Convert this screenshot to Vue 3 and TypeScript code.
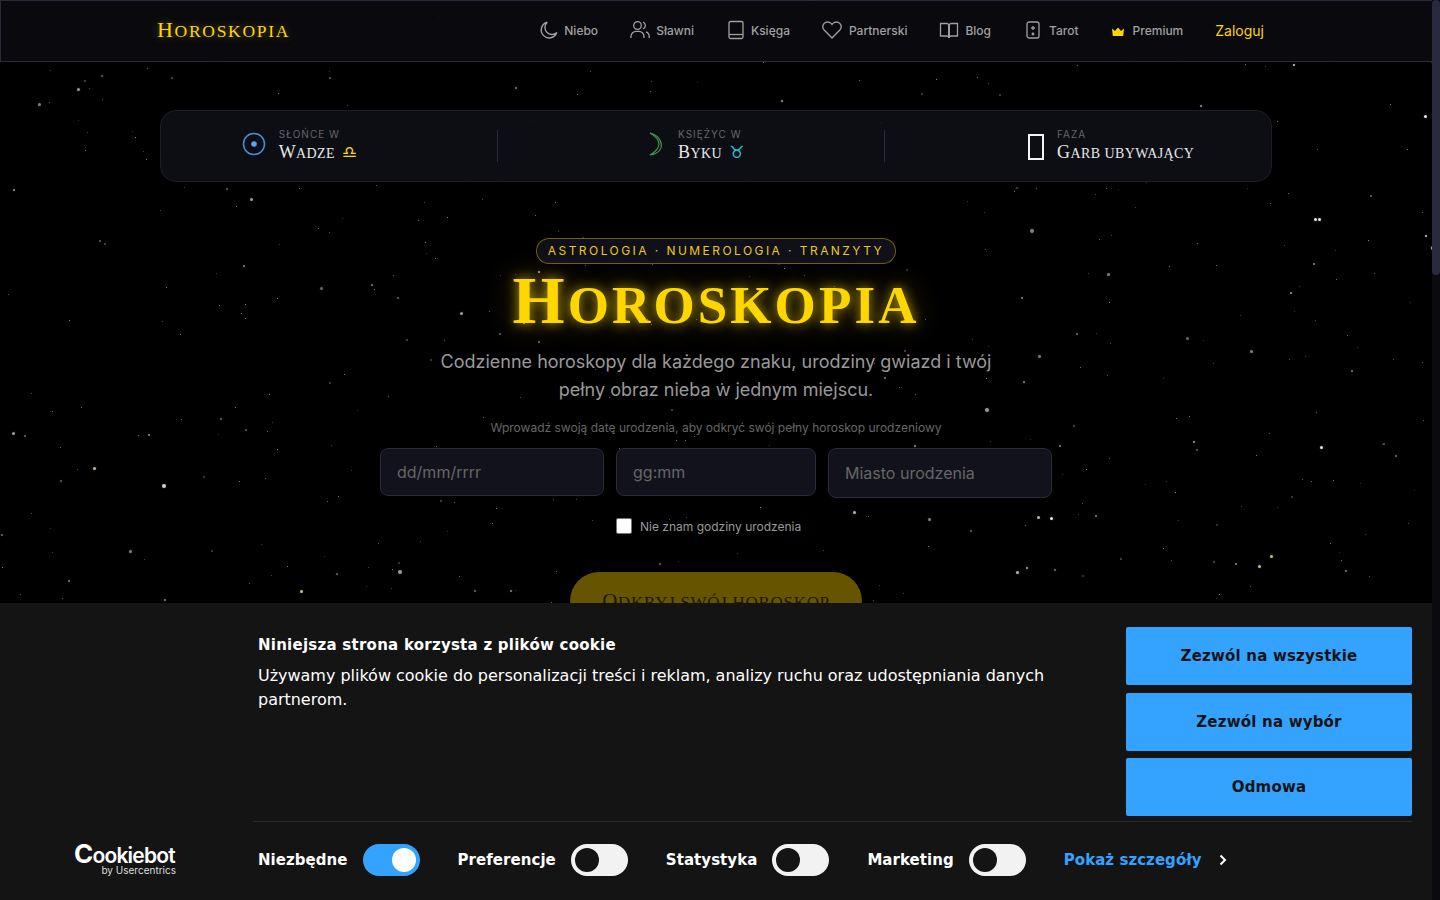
<template>
  <div class="screen">
    <div class="page">
      <div class="sky">
        <i
          v-for="(s, i) in stars"
          :key="i"
          class="star"
          :style="{ left: s.x + 'px', top: s.y + 'px', width: s.r + 'px', height: s.r + 'px', opacity: s.o, background: s.c }"
        ></i>
      </div>

      <header class="topbar">
        <a class="logo">Horoskopia</a>
        <nav class="nav">
          <a v-for="item in navItems" :key="item.label" class="nav-link" :style="{ gap: item.gap + 'px' }">
            <svg v-if="item.icon === 'moon'" width="20" height="20" viewBox="0 0 20 20" fill="none" stroke="currentColor" stroke-width="1.4"><path d="M8.2 2.2a8 8 0 1 0 9.6 10.4 7 7 0 0 1-9.6-10.4z" /></svg>
            <svg v-else-if="item.icon === 'people'" width="20" height="20" viewBox="0 0 20 20" fill="none" stroke="currentColor" stroke-width="1.3"><circle cx="7.5" cy="5.5" r="3.8" /><path d="M1 18v-1.5a5.2 5.2 0 0 1 5.2-5.2h2.6a5.2 5.2 0 0 1 5.2 5.2V18" /><path d="M13 2a3.8 3.8 0 0 1 0 7" /><path d="M16 11.8a5 5 0 0 1 3.2 4.7V18" /></svg>
            <svg v-else-if="item.icon === 'book'" width="20" height="20" viewBox="0 0 20 20" fill="none" stroke="currentColor" stroke-width="1.3"><rect x="3" y="1.5" width="14" height="17" rx="1.5" /><path d="M3 14.5h14" /></svg>
            <svg v-else-if="item.icon === 'heart'" width="20" height="20" viewBox="0 0 20 20" fill="none" stroke="currentColor" stroke-width="1.3"><path d="M10 18 2.2 10a5 5 0 0 1 0-6.6 4.8 4.8 0 0 1 6.8 0l1 1.1 1-1.1a4.8 4.8 0 0 1 6.8 0 5 5 0 0 1 0 6.6z" /></svg>
            <svg v-else-if="item.icon === 'open'" width="20" height="20" viewBox="0 0 20 20" fill="none" stroke="currentColor" stroke-width="1.3"><path d="M1.5 3.5H8l2 1 2-1h6.5V16H12l-2 1-2-1H1.500z" /><path d="M10 4v14" stroke-width="2" /></svg>
            <svg v-else-if="item.icon === 'card'" width="20" height="20" viewBox="-2 0 20 20" fill="none" stroke="currentColor" stroke-width="1.3"><rect x="2" y="2" width="12" height="16" rx="2" /><path d="M8 6v4M6 8h4" /><circle cx="8" cy="14" r=".8" fill="currentColor" /></svg>
            <svg v-else-if="item.icon === 'crown'" class="crown" width="14" height="20" viewBox="0 0 14 20"><path d="M1 8.5l3 2.5 3-3.500 3 3.500 3-2.500-.8 7.500H1.800z" fill="#ffd700" /></svg>
            <span>{{ item.label }}</span>
          </a>
          <a class="login">Zaloguj</a>
        </nav>
      </header>

      <main class="main">
        <section class="sky-bar">
          <div class="sky-item">
            <svg class="sun" width="24" height="24" viewBox="0 0 24 24" fill="none"><circle cx="12" cy="12" r="10.5" stroke="#4a90d9" stroke-width="1.5" /><circle cx="12" cy="12" r="2.8" fill="#56a5ee" /></svg>
            <div>
              <div class="sky-label">Słońce w</div>
              <div class="sky-value">Wadze <span class="sign libra">♎</span></div>
            </div>
          </div>
          <div class="sky-sep"></div>
          <div class="sky-item">
            <svg class="crescent" width="16" height="24" viewBox="0 0 16 24" fill="none"><path d="M1 1c12 2 18 19 0 22 6-3.500 9-8 9-11S7 4.500 1 1z" stroke="#3f9c4c" stroke-width="1.2" /></svg>
            <div>
              <div class="sky-label">Księżyc w</div>
              <div class="sky-value">Byku <span class="sign taurus">♉</span></div>
            </div>
          </div>
          <div class="sky-sep"></div>
          <div class="sky-item">
            <span class="tofu"></span>
            <div>
              <div class="sky-label">Faza</div>
              <div class="sky-value">Garb ubywający</div>
            </div>
          </div>
        </section>

        <section class="hero">
          <div class="badge">ASTROLOGIA · NUMEROLOGIA · TRANZYTY</div>
          <h1 class="title">Horoskopia</h1>
          <p class="subtitle">Codzienne horoskopy dla każdego znaku, urodziny gwiazd i twój<br />pełny obraz nieba w jednym miejscu.</p>
          <p class="hint">Wprowadź swoją datę urodzenia, aby odkryć swój pełny horoskop urodzeniowy</p>
          <form class="birth-form" @submit.prevent>
            <input class="field date" placeholder="dd/mm/rrrr" />
            <input class="field time" placeholder="gg:mm" />
            <input class="field city" placeholder="Miasto urodzenia" />
          </form>
          <label class="unknown">
            <span class="box"></span>
            Nie znam godziny urodzenia
          </label>
          <button class="cta" type="button"><span class="cta-text">Odkryj swój horoskop</span></button>
        </section>
      </main>

      <aside class="cookie">
        <div class="cookie-logo">
          <div class="cb-name"><span class="cb-c">C</span>ookiebot</div>
          <div class="cb-by">by Usercentrics</div>
        </div>
        <div class="cookie-body">
          <div class="cookie-top">
            <div class="cookie-text">
              <h2>Niniejsza strona korzysta z plików cookie</h2>
              <p>Używamy plików cookie do personalizacji treści i reklam, analizy ruchu oraz udostępniania danych partnerom.</p>
            </div>
            <div class="cookie-actions">
              <button v-for="b in cookieButtons" :key="b" class="cookie-btn" type="button">{{ b }}</button>
            </div>
          </div>
          <div class="cookie-bottom">
            <div v-for="t in toggles" :key="t.label" class="consent">
              <span class="consent-label">{{ t.label }}</span>
              <span class="toggle" :class="{ on: t.on }"><span class="knob"></span></span>
            </div>
            <a class="details">Pokaż szczegóły
              <svg width="10" height="12" viewBox="0 0 10 12" fill="none" stroke="#fff" stroke-width="2"><path d="M2.5 1.5 7 6l-4.500 4.500" /></svg>
            </a>
          </div>
        </div>
      </aside>
    </div>
    <div class="scrollbar"><div class="thumb"></div></div>
  </div>
</template>

<script setup lang="ts">
interface Star {
  x: number;
  y: number;
  r: number;
  o: number;
  c: string;
}

const navItems = [
  { label: "Niebo", icon: "moon", gap: 5 },
  { label: "Sławni", icon: "people", gap: 6 },
  { label: "Księga", icon: "book", gap: 5 },
  { label: "Partnerski", icon: "heart", gap: 7 },
  { label: "Blog", icon: "open", gap: 6 },
  { label: "Tarot", icon: "card", gap: 6 },
  { label: "Premium", icon: "crown", gap: 8 },
];

const cookieButtons = ["Zezwól na wszystkie", "Zezwól na wybór", "Odmowa"];

const toggles = [
  { label: "Niezbędne", on: true },
  { label: "Preferencje", on: false },
  { label: "Statystyka", on: false },
  { label: "Marketing", on: false },
];

// the brighter stars, read off the reference
const bright: [number, number, number, number][] = [
  [77, 88, 3, 0.6], [38, 103, 3, 0.5], [1293, 64, 2, 0.8], [1314, 218, 3, 0.9], [1318, 218, 3, 0.9],
  [1030, 229, 4, 0.5], [1107, 273, 3, 0.5], [1320, 446, 3, 0.9], [985, 408, 4, 0.6], [1038, 355, 3, 0.5],
  [162, 484, 4, 0.8], [12, 432, 3, 0.6], [398, 570, 4, 0.6], [1016, 571, 3, 0.7], [1026, 567, 2, 0.7],
  [853, 511, 3, 0.7], [928, 518, 3, 0.5], [1037, 516, 3, 0.7], [1050, 517, 3, 0.9], [129, 550, 3, 0.5],
  [68, 580, 2, 0.5], [320, 287, 3, 0.4], [460, 312, 3, 0.6], [250, 198, 3, 0.6], [243, 265, 2, 0.5],
  [1186, 337, 3, 0.4], [1290, 292, 2, 0.6], [1424, 115, 3, 0.9], [1425, 235, 2, 0.8], [1431, 246, 4, 0.7],
  [1250, 350, 3, 0.5], [1370, 195, 2, 0.4], [880, 122, 2, 0.6], [1200, 105, 2, 0.6], [440, 500, 2, 0.3],
  [1095, 515, 2, 0.5], [1345, 570, 2, 0.5], [60, 480, 2, 0.4], [215, 60, 2, 0.4],
];

const golds: [number, number][] = [[1258, 565], [93, 467], [300, 590], [1270, 555]];

// small deterministic generator so the field is the same on every load
let seed = 4711;
const rnd = () => {
  seed = (seed * 16807) % 2147483647;
  return seed / 2147483647;
};

const stars: Star[] = bright.map(([x, y, r, o]) => ({ x, y, r, o, c: "#fff" }));
golds.forEach(([x, y]) => stars.push({ x, y, r: 3, o: 0.8, c: "#ffdf9a" }));
for (let i = 0; i < 420; i++) {
  stars.push({
    x: Math.floor(rnd() * 1432),
    y: Math.floor(rnd() * 610),
    r: rnd() > 0.8 ? 2 : 1,
    o: 0.2 + rnd() * 0.45,
    c: "#fff",
  });
}
</script>

<style scoped>
.screen {
  display: flex;
  height: 900px;
  overflow: hidden;
  background: #000;
  font-family: Inter, "Noto Sans", sans-serif;
}

.page {
  position: relative;
  flex: 1;
  overflow: hidden;
}

.scrollbar {
  width: 8px;
  background: #0a0a0f;
}

.thumb {
  height: 275px;
  background: #2a2a3e;
  border-radius: 4px;
}

.sky {
  position: absolute;
  inset: 0;
}

.star {
  position: absolute;
  border-radius: 50%;
  box-shadow: 0 0 2px rgba(255, 255, 255, 0.4);
}

/* header */
.topbar {
  position: relative;
  display: flex;
  align-items: center;
  justify-content: space-between;
  height: 62px;
  box-sizing: border-box;
  padding: 0 168px 2px 156px;
  background: rgba(10, 10, 15, 0.95);
  border: 1px solid #2a2a3a;
  border-right: 0;
}

.logo {
  font-family: "Liberation Serif", serif;
  font-size: 17.5px;
  text-transform: uppercase;
  letter-spacing: 1.7px;
  color: #ffd700;
  text-shadow: 0 0 10px rgba(255, 215, 0, 0.4);
}

.logo::first-letter {
  font-size: 22px;
}

.nav {
  display: flex;
  align-items: center;
  gap: 32px;
}

.nav-link {
  display: flex;
  align-items: center;
  font-size: 12px;
  font-weight: 500;
  color: #a0a0a0;
}

.crown {
  display: block;
}

.login {
  font-size: 14px;
  color: #ffd700;
}

/* sky strip */
.main {
  position: relative;
  display: flex;
  flex-direction: column;
  align-items: center;
  padding-top: 48px;
}

.sky-bar {
  display: flex;
  align-items: center;
  justify-content: space-around;
  box-sizing: border-box;
  width: 1112px;
  height: 72px;
  padding: 0 7px 0 11px;
  border: 1px solid #1d1d26;
  border-radius: 16px;
  background: rgba(14, 14, 21, 0.95);
}

.sky-item {
  display: flex;
  align-items: center;
  gap: 13px;
}

.sun {
  margin-bottom: 4px;
}

.crescent {
  margin-left: 12px;
  margin-bottom: 4px;
}

.sky-label {
  font-size: 10px;
  letter-spacing: 1px;
  line-height: 14px;
  color: #666;
  text-transform: uppercase;
}

.sky-value {
  font-family: "Liberation Serif", serif;
  font-size: 14px;
  line-height: 22px;
  letter-spacing: 0.4px;
  text-transform: uppercase;
  color: #e8e8e8;
}

.sky-value::first-letter {
  font-size: 18px;
}

.sign {
  margin-left: 3px;
  font-family: "DejaVu Sans", sans-serif;
  font-size: 17px;
  line-height: 14px;
}

.libra {
  color: #ffd700;
}

.taurus {
  color: #22c8d8;
}

.sky-sep {
  width: 1px;
  height: 32px;
  background: #2a2a3a;
}

.tofu {
  display: block;
  box-sizing: border-box;
  width: 16px;
  height: 26px;
  margin: 2px 0 0 4px;
  border: 2px solid #f4f4f4;
}

/* hero */
.hero {
  display: flex;
  flex-direction: column;
  align-items: center;
  padding-top: 56px;
  text-align: center;
}

.badge {
  box-sizing: border-box;
  width: 360px;
  height: 26px;
  line-height: 24px;
  border: 1px solid rgba(255, 215, 0, 0.4);
  border-radius: 13px;
  background: #10101c;
  font-size: 12px;
  letter-spacing: 2.44px;
  color: #ecca12;
}

.title {
  margin: 6px 0 0;
  font-family: "Liberation Serif", serif;
  font-size: 53px;
  line-height: 60px;
  font-weight: 700;
  text-transform: uppercase;
  letter-spacing: 3.1px;
  color: #ffd700;
  text-shadow: 0 0 12px rgba(255, 215, 0, 0.7), 0 0 30px rgba(255, 215, 0, 0.35);
}

.title::first-letter {
  font-size: 67px;
}

.subtitle {
  margin: 13px 0 0;
  font-size: 18px;
  line-height: 28px;
  color: #999;
}

.hint {
  margin: 15px 0 0;
  font-size: 12px;
  line-height: 18px;
  color: #666;
}

.birth-form {
  display: flex;
  align-items: flex-start;
  gap: 12px;
  margin-top: 11px;
}

.field {
  box-sizing: border-box;
  height: 48px;
  padding: 0 16px;
  border: 1px solid #2a2a3a;
  border-radius: 8px;
  background: #12121c;
  font-family: inherit;
  font-size: 16px;
  color: #ddd;
  outline: none;
}

.field::placeholder {
  color: #666;
}

.date {
  width: 224px;
}

.time {
  width: 200px;
}

.city {
  width: 224px;
  height: 50px;
}

.unknown {
  display: flex;
  align-items: center;
  gap: 8px;
  width: 200px;
  margin-top: 20px;
  font-size: 12px;
  line-height: 15px;
  white-space: nowrap;
  color: #999;
  text-align: left;
}

.box {
  flex: none;
  box-sizing: border-box;
  width: 16px;
  height: 16px;
  border: 1px solid #767676;
  border-radius: 2px;
  background: #fff;
}

.cta {
  width: 292px;
  height: 58px;
  margin-top: 38px;
  padding: 0;
  border: 0;
  border-radius: 29px;
  background: #675400;
  font-family: "Liberation Serif", serif;
  color: #1c1700;
}

.cta-text {
  display: block;
  font-size: 17px;
  text-transform: uppercase;
  letter-spacing: 0.7px;
}

.cta-text::first-letter {
  font-size: 21px;
}

/* cookie banner */
.cookie {
  position: absolute;
  left: 0;
  right: 0;
  bottom: 0;
  display: flex;
  box-sizing: border-box;
  height: 297px;
  padding: 24px 20px 0 0;
  background: #141414;
  font-family: "DejaVu Sans", sans-serif;
  color: #fff;
}

.cookie-logo {
  align-self: flex-end;
  width: 253px;
  box-sizing: border-box;
  height: 60px;
  padding: 6px 0 0 74px;
  font-family: Inter, sans-serif;
}

.cb-name {
  width: 102px;
  font-size: 21px;
  line-height: 20px;
  font-weight: 600;
  letter-spacing: -0.8px;
}

.cb-c {
  font-size: 26px;
  line-height: 0;
  font-weight: 700;
}

.cb-by {
  width: 102px;
  font-size: 10px;
  line-height: 9px;
  text-align: right;
  color: #ddd;
}

.cookie-body {
  flex: 1;
  display: flex;
  flex-direction: column;
}

.cookie-top {
  display: flex;
  justify-content: space-between;
  height: 194px;
  padding-left: 5px;
  border-bottom: 1px solid #2a2a2a;
}

.cookie-text {
  width: 800px;
}

.cookie-text h2 {
  margin: 6px 0 0;
  font-size: 15px;
  line-height: 24px;
  font-weight: 700;
  letter-spacing: 0.25px;
}

.cookie-text p {
  margin: 7px 0 0;
  font-size: 16px;
  line-height: 24px;
  letter-spacing: -0.02px;
}

.cookie-actions {
  display: flex;
  flex-direction: column;
  gap: 7.5px;
  width: 286px;
}

.cookie-btn {
  height: 58px;
  border: 0;
  border-radius: 2px;
  background: #33a3ff;
  font-family: inherit;
  font-size: 15px;
  font-weight: 700;
  letter-spacing: 0.2px;
  color: #141414;
}

.cookie-bottom {
  display: flex;
  align-items: center;
  gap: 38px;
  height: 76px;
  padding-left: 5px;
}

.consent {
  display: flex;
  align-items: center;
  gap: 15px;
}

.consent-label {
  font-size: 15px;
  font-weight: 700;
  letter-spacing: 0.05px;
}

.toggle {
  display: flex;
  align-items: center;
  box-sizing: border-box;
  width: 57px;
  height: 32px;
  padding: 0 4px;
  border-radius: 16px;
  background: #f2f2f2;
}

.toggle.on {
  justify-content: flex-end;
  background: #33a3ff;
}

.knob {
  width: 24px;
  height: 24px;
  border-radius: 50%;
  background: #141414;
}

.toggle.on .knob {
  background: #fff;
}

.details {
  display: flex;
  align-items: center;
  gap: 16px;
  font-size: 15px;
  font-weight: 700;
  letter-spacing: 0.05px;
  color: #33a3ff;
}
</style>

<style>
html,
body {
  overflow: hidden;
  background: #000;
}
</style>
